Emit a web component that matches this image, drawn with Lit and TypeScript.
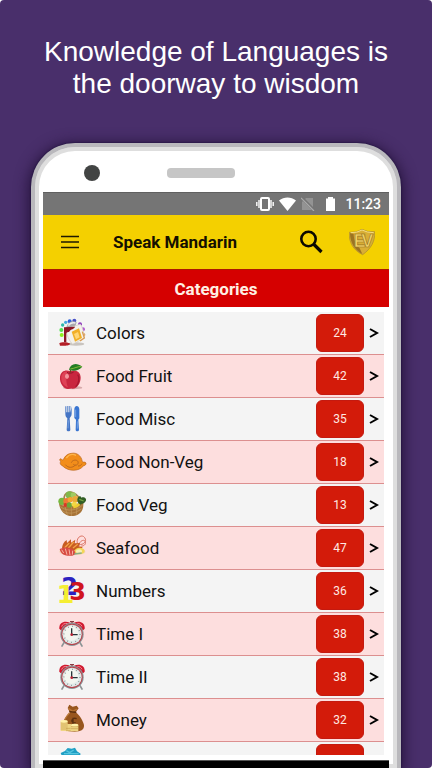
import { LitElement, html, css, svg, TemplateResult } from "lit";
import { customElement, property } from "lit/decorators.js";

const clock = svg`
  <path d="M18 68l-6 10M66 68l6 10" stroke="#8d9496" stroke-width="5" stroke-linecap="round"/>
  <path d="M4 26C2 8 20 0 36 8L10 32z" fill="#d0182e"/><path d="M80 26C82 8 64 0 48 8l26 24z" fill="#d0182e"/>
  <path d="M11 20c2-8 9-11 18-9M58 10c6 0 12 3 14 9" stroke="#f58a92" stroke-width="3" fill="none"/>
  <path d="M42 4v8M36 5h12" stroke="#8b3b42" stroke-width="4"/>
  <circle cx="42" cy="43" r="35" fill="#89979a"/><circle cx="42" cy="43" r="32" fill="#b8444d"/>
  <circle cx="42" cy="43" r="29" fill="#dfe9e8"/><circle cx="40" cy="41" r="22" fill="#f3f5ef"/>
  <circle cx="42" cy="43" r="24" fill="none" stroke="#6f7b7c" stroke-width="4" stroke-dasharray="2 10.5"/>
  <path d="M41 25v19h18" stroke="#26353a" stroke-width="4" fill="none"/><circle cx="41" cy="44" r="4" fill="#b23"/>`;

const icons: Record<string, TemplateResult> = {
  colors: svg`
    <g><circle cx="11" cy="48" r="6" fill="#8ef01c"/><circle cx="10" cy="33" r="6" fill="#55df55"/><circle cx="14" cy="18" r="5" fill="#2cb9a8"/>
    <circle cx="23" cy="10" r="5" fill="#44a9de"/><circle cx="35" cy="7" r="6" fill="#2e62dc"/><circle cx="49" cy="5" r="6" fill="#4850c8"/>
    <circle cx="66" cy="16" r="6" fill="#8c34bd"/><circle cx="75" cy="31" r="6" fill="#b25bd0"/><circle cx="77" cy="47" r="5" fill="#e29c53"/></g>
    <ellipse cx="54" cy="75" rx="25" ry="5" fill="#c9c4bf"/>
    <path d="M26 22C30 8 46 2 56 10l-5 15-28 8z" fill="#aaa9ad"/><path d="M31 20c5-8 13-10 21-8" stroke="#eee" stroke-width="4" fill="none"/>
    <path d="M24 31l43-16c7 9 11 28 12 42L44 76C34 66 25 48 24 31z" fill="#f3f1eb" stroke="#cfcac2" stroke-width="2"/>
    <path d="M41 38l22-10 9 29-21 11z" fill="#f1af27"/><path d="M48 45l12-6 5 16-11 6z" fill="#ffd675"/>
    <path d="M73 38l6 19-13 9" fill="none" stroke="#d99c54" stroke-width="4"/>
    <path d="M18 25l33-2c-3 9-12 6-15 12-5 8-9 0-11 9v26h-7z" fill="#8e1725"/>
    <path d="M4 73c6-5 24-4 31 0 3 5-5 7-12 7H6z" fill="#b41e26"/>`,
  fruit: svg`
    <ellipse cx="44" cy="77" rx="29" ry="5" fill="#d6a9aa"/>
    <path d="M36 28c-11-6-28-2-30 17-2 18 11 36 24 36 5 0 8-2 13-1 15 1 25-18 25-33 0-20-18-25-32-19z" fill="#c9263f"/>
    <path d="M10 45c1-15 14-20 24-15-11 6-11 29-4 46C16 72 9 59 10 45z" fill="#de4156"/>
    <ellipse cx="27" cy="43" rx="6" ry="8" fill="#f2949c"/><path d="M59 38c7 8 4 27-6 36" stroke="#a3182f" stroke-width="4" fill="none"/>
    <path d="M27 31c6 4 15 3 20-1" stroke="#94122a" stroke-width="3" fill="none"/>
    <path d="M37 32c-1-10 1-14 5-18" stroke="#69421e" stroke-width="4" fill="none"/>
    <path d="M33 23C37 5 55 0 73 14 61 28 45 28 33 23z" fill="#247d24"/><path d="M37 21c12-1 22-9 34-7" stroke="#83bb38" stroke-width="3" fill="none"/>`,
  fork: svg`
    <path d="M22 4h3v18h3V3h3v19h3V3h3v20l4-19v22c0 8-5 10-6 14l2 34c0 6-11 6-11 0l2-34c-5-4-6-8-6-15z" fill="#4475c5"/>
    <path d="M49 12c1-12 14-12 15 1v27l-3 4 2 30c0 6-10 6-10 0l1-30-5-5z" fill="#3975d1"/>
    <path d="M53 14v22M31 46l-1 24M58 49v22" stroke="#90b6ed" stroke-width="2"/>`,
  chicken: svg`
    <path d="M14 54c18 18 50 16 62 0 6-2 9-5 8-9-3-5-8-1-11-4C70 22 55 13 41 16 27 17 20 26 16 35c-4 3-7-5-10-2-3 4 3 6 2 9-4 3 1 10 6 12z" fill="#f28d1a" stroke="#b5641a" stroke-width="2"/>
    <path d="M25 30c7-10 18-13 29-8" stroke="#ffb54b" stroke-width="4" fill="none"/>
    <path d="M22 50c9 11 22 10 30 1M40 44c3-9 17-10 20-3 3 8-8 15-14 8M60 54c7 0 10-3 12-7" fill="none" stroke="#bd691c" stroke-width="3"/>`,
  basket: svg`
    <path d="M3 36c19 16 50 11 72-9 5 31-8 45-29 48C22 78 5 60 3 36z" fill="#a77438"/>
    <path d="M7 47c22 17 49 11 67-5M12 59c19 12 40 9 58-5M19 40l9 32M40 44v31M58 38l-3 33" fill="none" stroke="#c69c5f" stroke-width="2"/>
    <path d="M20 34C13 8 31-2 47 6c12 5 18 15 23 28" fill="none" stroke="#a4854e" stroke-width="5"/>
    <circle cx="12" cy="31" r="11" fill="#77b63e"/><circle cx="34" cy="12" r="11" fill="#81b84b"/><circle cx="46" cy="12" r="8" fill="#a1cb63"/>
    <circle cx="26" cy="31" r="10" fill="#ef7936"/><circle cx="37" cy="26" r="8" fill="#f4a434"/><circle cx="52" cy="25" r="10" fill="#e9a939"/>
    <circle cx="22" cy="42" r="6" fill="#d83826"/><circle cx="34" cy="42" r="8" fill="#6ba63a"/><circle cx="49" cy="40" r="8" fill="#f3d744"/>
    <path d="M46 49c12-2 21-10 25-23" stroke="#efcd31" stroke-width="7" fill="none"/>
    <path d="M58 25c2-11 10-11 12-5 8-4 18 3 13 11-5 8-11 6-15 10-6-2-11-7-10-16z" fill="#315e25"/><path d="M64 25l13 5" stroke="#75a644" stroke-width="4"/>`,
  seafood: svg`
    <path d="M58 28c-4-18 14-29 22-17 9 12-6 23-16 20M64 35c-3-12 15-22 18-12 3 9-7 14-12 13" fill="none" stroke="#dc7566" stroke-width="3"/>
    <ellipse cx="43" cy="53" rx="39" ry="11" fill="#f2d5b8"/>
    <path d="M12 43c2-17 10-22 14-25l1 9 12-11v10l13-9-2 11 16-1-4 10 12 2-9 13z" fill="#c85c21"/>
    <path d="M20 41l14-14M31 42l16-18M45 42l14-11" stroke="#f3a447" stroke-width="4"/>
    <path d="M5 45c15-8 35-6 47 7 5 7-2 11-9 13-18 2-34-1-38-20z" fill="#d84b42"/>
    <path d="M11 47l6 10M22 44l5 18M33 46l3 17M44 50l-1 12" stroke="#f7b4a5" stroke-width="3"/>
    <ellipse cx="65" cy="51" rx="15" ry="10" fill="#f4d656"/><ellipse cx="63" cy="52" rx="9" ry="6" fill="#f7efbb"/><path d="M49 60l22-3" stroke="#89ab83" stroke-width="4"/>`,
  numbers: svg`
    <g font-family="DejaVu Sans, sans-serif" font-weight="700"><text x="10" y="54" font-size="72" fill="#2b22c0">2</text>
    <text x="34" y="69" font-size="72" fill="#d01420">3</text><text x="-4" y="78" font-size="76" fill="#f5ee32">1</text></g>`,
  clock,
  money: svg`
    <path d="M29 6l5-10 10 6 12-3 6 8-9 12c13 9 22 26 25 38 1 15-10 20-28 20-25 0-42-6-35-26 4-13 12-23 21-31z" fill="#98561e"/>
    <path d="M35 20c-8 9-15 18-17 29M31 7l13 9 13-7" fill="none" stroke="#b87636" stroke-width="4"/><path d="M34 17l21 2" stroke="#51290c" stroke-width="4"/>
    <path d="M56 38c-17-7-20 16-3 12M45 35v19" fill="none" stroke="#5b3010" stroke-width="4"/>
    <path d="M8 46h21v29H8zM39 57h22v19H39zM24 54h16v22H24z" fill="#efd584"/>
    <path d="M8 51h21M8 57h21M8 63h21M8 69h21M39 62h22M39 68h22M24 67h14M24 73h14" stroke="#b88d3c" stroke-width="1.500"/>
    <ellipse cx="18" cy="46" rx="11" ry="4" fill="#fff1a9"/><ellipse cx="50" cy="57" rx="11" ry="4" fill="#fff1a9"/>`,
  hat: svg`
    <path d="M12 22L8 12l13-6 8-9 12 2 10-3 6 11 11 7-4 12z" fill="#209fc4"/><path d="M25 5l10 6 12-8M18 14h44" fill="none" stroke="#55c5df" stroke-width="4"/>`,
};

interface Category {
  label: string;
  icon: string;
  count: string;
}

const categories: Category[] = [
  { label: "Colors", icon: "colors", count: "24" },
  { label: "Food Fruit", icon: "fruit", count: "42" },
  { label: "Food Misc", icon: "fork", count: "35" },
  { label: "Food Non-Veg", icon: "chicken", count: "18" },
  { label: "Food Veg", icon: "basket", count: "13" },
  { label: "Seafood", icon: "seafood", count: "47" },
  { label: "Numbers", icon: "numbers", count: "36" },
  { label: "Time I", icon: "clock", count: "38" },
  { label: "Time II", icon: "clock", count: "38" },
  { label: "Money", icon: "money", count: "32" },
  { label: "", icon: "hat", count: "" },
];

@customElement("category-row")
export class CategoryRow extends LitElement {
  @property({ attribute: false }) category!: Category;

  static styles = css`
    :host { display: block; }
    .row {
      display: flex; align-items: center; width: 100%; height: 43px; box-sizing: border-box;
      padding: 0 5px 0 10px; border: 0; border-bottom: 1px solid #dc8f8f;
      background: transparent; font: 17px/20px Roboto, sans-serif; color: #111; text-align: left;
    }
    .icon { width: 28px; height: 28px; flex: none; overflow: visible; }
    .label { flex: 1; padding-left: 10px; }
    .count {
      display: flex; align-items: center; justify-content: center; box-sizing: border-box;
      width: 48px; height: 38px; border-radius: 6px; border: 1px solid #c41a10;
      background: #d31b0a; color: #ffe9e4; font-size: 12px;
    }
    .chevron { width: 10px; height: 12px; margin-left: 5px; }
  `;

  render() {
    const { label, icon, count } = this.category;
    return html`<button class="row">
      <svg class="icon" viewBox="0 0 84 84" aria-hidden="true">${icons[icon]}</svg>
      <span class="label">${label}</span>
      <span class="count">${count}</span>
      <svg class="chevron" viewBox="0 0 10 12" aria-hidden="true">
        <path d="M1 2l7 4-7 4" fill="none" stroke="#000" stroke-width="2" />
      </svg>
    </button>`;
  }
}

@customElement("app-root")
export class AppRoot extends LitElement {
  static styles = css`
    :host { display: block; background: #fff; font-family: Roboto, sans-serif; }
    .page {
      display: flex; flex-direction: column; height: 100vh; overflow: hidden;
      box-sizing: border-box; padding: 36px 31px 0; border-radius: 4px; background: #492f6b;
    }
    .headline {
      margin: 0 0 43px; text-align: center; color: #fff;
      font: 400 28px/32px "Liberation Sans", Arial, sans-serif;
    }
    .line { display: block; }
    .phone {
      flex: 1; min-height: 0; display: flex; flex-direction: column;
      padding: 0 4px; border: 4px solid #b9b8bc; border-bottom: 0;
      border-radius: 44px 44px 0 0; background: #fff;
      box-shadow: inset 0 0 0 4px #dedede, 0 0 2px #150a35, 0 3px 14px 3px #28153f;
    }
    .top { display: flex; align-items: center; height: 45px; padding: 6px 45px 0; box-sizing: border-box; }
    .camera { width: 16px; height: 16px; border-radius: 50%; background: #424443; }
    .speaker { width: 68px; height: 10px; border-radius: 4px; background: #c6c6c6; margin-left: 67px; }
    .screen { flex: 1; min-height: 0; display: flex; flex-direction: column; margin: 0 4px; }
    .status {
      display: flex; align-items: center; justify-content: flex-end; gap: 5px;
      height: 23px; padding-right: 8px; box-sizing: border-box;
      background: #757575; border-top: 1px solid #606060; color: #fff; font-size: 14px; font-weight: 500;
    }
    .bar { display: flex; align-items: center; height: 54px; padding: 0 14px 0 18px; box-sizing: border-box; background: #f4d000; }
    .tool { display: flex; padding: 0; border: 0; background: none; }
    .title { flex: 1; margin: 0; padding-left: 34px; font-size: 17px; line-height: 20px; font-weight: 700; color: #141000; }
    .logo { width: 26px; height: 28px; margin-left: 26px; }
    .section {
      margin: 0 0 5px; height: 38px; box-sizing: border-box; border-top: 1px solid #ae1800;
      background: #d50000; color: #fff0e4; text-align: center; font-size: 17px; line-height: 38px; font-weight: 700;
    }
    .list { flex: 1; min-height: 0; overflow: hidden; margin: 0 5px; padding: 0; list-style: none; }
    .item { background: #f4f4f4; }
    .item:nth-child(even) { background: #fddede; }
    .nav { height: 8px; margin-top: 5px; background: #000; border-top: 1px solid #555; box-sizing: border-box; }
  `;

  render() {
    return html`<main class="page">
      <h1 class="headline"><span class="line">Knowledge of Languages is</span><span class="line">the doorway to wisdom</span></h1>
      <div class="phone">
        <div class="top"><span class="camera"></span><span class="speaker"></span></div>
        <div class="screen">
          <div class="status">
            <svg width="18" height="14" viewBox="0 0 18 14" fill="none" stroke="#fff" stroke-width="1.4" aria-hidden="true">
              <rect x="5" y="1" width="8" height="12" rx="1" stroke-width="2"/><path d="M3 3v8M.8 5v4M15 3v8M17.200 5v4"/></svg>
            <svg width="17" height="14" viewBox="0 0 17 14" aria-hidden="true"><path d="M0 3.500C5-.5 12-.5 17 3.500L8.500 14z" fill="#fff"/></svg>
            <svg width="14" height="14" viewBox="0 0 14 14" aria-hidden="true"><path d="M5 1h7v12H1V5z" fill="#939393"/><path d="M1 1l12 12" stroke="#757575" stroke-width="3"/><path d="M0 1l13 13" stroke="#aaa" stroke-width="1.200"/></svg>
            <svg width="20" height="14" viewBox="0 0 20 14" aria-hidden="true"><path d="M8 0h5v1.500h2V14H6V1.500h2z" fill="#fff"/></svg>
            <span>11:23</span>
          </div>
          <header class="bar">
            <button class="tool" aria-label="Menu"><svg width="18" height="14" viewBox="0 0 18 14"><path d="M0 1.500h18M0 7h18M0 12.500h18" stroke="#1d1900" stroke-width="1.700"/></svg></button>
            <h2 class="title">Speak Mandarin</h2>
            <button class="tool" aria-label="Search"><svg width="24" height="24" viewBox="0 0 24 24" fill="none" stroke="#0b0900"><circle cx="9.500" cy="9" r="7.200" stroke-width="2.600"/><path d="M14.500 14l8 8" stroke-width="3.200"/></svg></button>
            <svg class="logo" viewBox="0 0 78 84" aria-hidden="true">
              <path d="M1 13Q24 14 39 4q15 9 38 7C79 40 66 62 41 80 12 66-1 42 1 13z" fill="#d9ae35" stroke="#a88a30" stroke-width="2"/>
              <path d="M3 15C3 43 15 64 40 78l-8-17C19 48 14 32 14 18z" fill="#9c7422"/>
              <path d="M5 14q19 1 34-8 15 8 35 8" fill="none" stroke="#f3dc83" stroke-width="3"/>
              <g font-family="Liberation Sans, sans-serif" font-weight="700" fill="#f2d265" stroke="#9a7724" stroke-width="2">
                <text x="14" y="58" font-size="54">E</text><text x="37" y="58" font-size="54">V</text></g></svg>
          </header>
          <h3 class="section">Categories</h3>
          <ul class="list">
            ${categories.map((c) => html`<li class="item"><category-row .category=${c}></category-row></li>`)}
          </ul>
          <div class="nav"></div>
        </div>
      </div>
    </main>`;
  }
}
